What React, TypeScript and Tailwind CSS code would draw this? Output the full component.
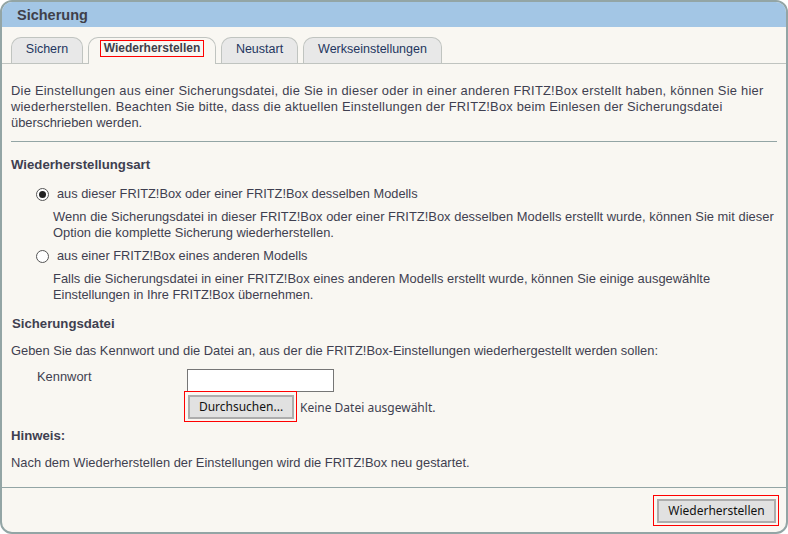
import React from "react"

const tabs = [
  { label: "Sichern", w: "w-[72px]" },
  { label: "Wiederherstellen", w: "w-[128px]", active: true },
  { label: "Neustart", w: "w-[77px]" },
  { label: "Werkseinstellungen", w: "w-[139px]" },
]

function Radio({ checked }: { checked?: boolean }) {
  return (
    <span className="flex h-[13px] w-[13px] shrink-0 items-center justify-center rounded-full border border-[#555] bg-white">
      {checked && <span className="h-[7px] w-[7px] rounded-full bg-[#222]" />}
    </span>
  )
}

export default function App() {
  return (
    <div className="h-[534px] w-[788px] overflow-hidden bg-white font-['Liberation_Sans',Arial,sans-serif] text-[12.9px] leading-4 text-[#3f3f50]">
      <div className="flex h-[534px] flex-col overflow-hidden rounded-[12px] border-2 border-[#93a5a5] bg-[#f9f7f2]">
        {/* Title */}
        <div className="flex h-[25px] shrink-0 items-center bg-[#a3c6e5] pl-[15px] text-[14.5px] font-bold text-[#3f3f4a]">
          Sicherung
        </div>

        {/* Tabs */}
        <div className="mt-[10px] flex h-[27px] shrink-0 gap-[5px] border-b border-[#c0c4c0] pl-[9px] text-[12.5px]">
          {tabs.map((tab) => (
            <div
              key={tab.label}
              className={
                tab.active
                  ? `${tab.w} flex h-[27px] items-start justify-center rounded-t-[10px] border border-b-0 border-[#c0c4c0] bg-[#f9f7f2] pt-[2px] text-[12px] font-bold`
                  : `${tab.w} flex h-[26px] items-center justify-center rounded-t-[10px] border border-b-0 border-[#c0c4c0] bg-[#e8e8e8] pb-[3px] text-[#24365f]`
              }
            >
              {tab.active ? (
                <span className="border border-[#ff0000] px-[3px] leading-[15px] text-[#3f3f4a]">{tab.label}</span>
              ) : (
                tab.label
              )}
            </div>
          ))}
        </div>

        {/* Content */}
        <div className="flex-1 px-[9px] pt-[19px]">
          <p>
            <span className="block tracking-[0.245px]">Die Einstellungen aus einer Sicherungsdatei, die Sie in dieser oder in einer anderen FRITZ!Box erstellt haben, können Sie hier</span>
            <span className="block tracking-[0.2px]">wiederherstellen. Beachten Sie bitte, dass die aktuellen Einstellungen der FRITZ!Box beim Einlesen der Sicherungsdatei</span>
            <span className="block">überschrieben werden.</span>
          </p>
          <div className="mt-[10px] border-t border-[#93a5a5]" />

          <h2 className="mt-[15px] text-[13.2px] font-bold">Wiederherstellungsart</h2>

          <label className="mt-[13px] flex items-center gap-[8px] pl-[25px] text-[12.8px]">
            <Radio checked />
            aus dieser FRITZ!Box oder einer FRITZ!Box desselben Modells
          </label>
          <p className="mt-[7px] pl-[42px]">
            <span className="block tracking-[0.025px]">Wenn die Sicherungsdatei in dieser FRITZ!Box oder einer FRITZ!Box desselben Modells erstellt wurde, können Sie mit dieser</span>
            <span className="block">Option die komplette Sicherung wiederherstellen.</span>
          </p>
          <label className="mt-[7px] flex items-center gap-[8px] pl-[25px] text-[12.8px]">
            <Radio />
            aus einer FRITZ!Box eines anderen Modells
          </label>
          <p className="mt-[7px] pl-[42px]">
            <span className="block tracking-[0.02px]">Falls die Sicherungsdatei in einer FRITZ!Box eines anderen Modells erstellt wurde, können Sie einige ausgewählte</span>
            <span className="block text-[12.8px]">Einstellungen in Ihre FRITZ!Box übernehmen.</span>
          </p>

          <h2 className="mt-[13px] pl-px text-[13.2px] font-bold">Sicherungsdatei</h2>
          <p className="mt-[11px]">Geben Sie das Kennwort und die Datei an, aus der die FRITZ!Box-Einstellungen wiederhergestellt werden sollen:</p>

          <div className="mt-[10px] flex">
            <span className="w-[176px] pl-[26px]">Kennwort</span>
            <div className="h-[23px] w-[147px] border border-[#767676] bg-white" />
          </div>
          <div className="ml-[173px] mt-[-1px] flex items-center">
            <div className="flex h-[31px] w-[113px] items-start border border-[#ff0000] pl-[3px] pt-[3px]">
              <button className="h-[24px] w-[106px] border-2 border-[#adadad] bg-[#e1e1e1] font-['Noto_Sans',sans-serif] text-[12px] text-[#111]">
                Durchsuchen...
              </button>
            </div>
            <span className="ml-[3px] pt-[2px] font-['Noto_Sans',sans-serif] text-[12px]">Keine Datei ausgewählt.</span>
          </div>

          <h2 className="mt-[6px] text-[13.2px] font-bold">Hinweis:</h2>
          <p className="mt-[11px]">Nach dem Wiederherstellen der Einstellungen wird die FRITZ!Box neu gestartet.</p>
        </div>

        {/* Footer */}
        <div className="flex h-[45px] shrink-0 items-start justify-end border-t border-[#93a5a5] pr-[7px] pt-[7px]">
          <div className="flex h-[31px] w-[126px] items-start border border-[#ff0000] pl-[3px] pt-[3px]">
            <button className="h-[24px] w-[119px] border-2 border-[#adadad] bg-[#e1e1e1] font-['Noto_Sans',sans-serif] text-[12px] text-[#111]">
              Wiederherstellen
            </button>
          </div>
        </div>
      </div>
    </div>
  )
}
